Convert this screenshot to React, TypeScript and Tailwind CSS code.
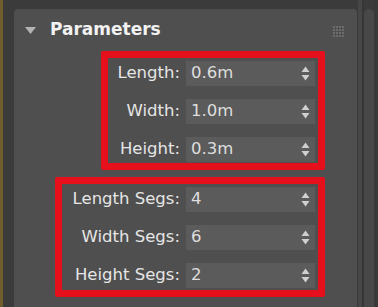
const group1 = [
  { label: "Length:", value: "0.6m" },
  { label: "Width:", value: "1.0m" },
  { label: "Height:", value: "0.3m" },
]

const group2 = [
  { label: "Length Segs:", value: "4" },
  { label: "Width Segs:", value: "6" },
  { label: "Height Segs:", value: "2" },
]

function Spinner() {
  return (
    <svg width="9" height="15" viewBox="0 0 9 15" className="shrink-0">
      <path d="M4.5 0.5 L8.5 6 L0.5 6 Z" fill="#cfcfcf" />
      <path d="M0.5 9 L8.5 9 L4.5 14.5 Z" fill="#cfcfcf" />
    </svg>
  )
}

function Row({ label, value }: { label: string; value: string }) {
  return (
    <div className="flex h-[25px] items-center justify-end gap-[6px]">
      <span className="whitespace-nowrap text-[16.5px] leading-none text-[#e6e6e6]">{label}</span>
      <div className="flex h-[25px] w-[129px] items-center justify-between bg-[#5b5b5b] pl-[5px] pr-[5px]">
        <span className="text-[16.5px] leading-none text-[#dedede]">{value}</span>
        <Spinner />
      </div>
    </div>
  )
}

function GridIcon() {
  return (
    <svg width="11" height="11" viewBox="0 0 11 11">
      {[0, 3, 6, 9].map((y) =>
        [0, 3, 6, 9].map((x) => (
          <rect key={`${x}-${y}`} x={x} y={y} width="2" height="2" fill="#6c6c6c" />
        ))
      )}
    </svg>
  )
}

export default function App() {
  return (
    <div
      className="flex h-[307px] w-[378px] overflow-hidden bg-[#3b3b3b]"
      style={{ fontFamily: '"DejaVu Sans", Verdana, sans-serif' }}
    >
      {/* gold edge */}
      <div className="w-[3px] shrink-0 bg-[#6f5d2b]" />

      {/* rollout panel */}
      <div className="ml-[11px] mt-[9px] flex h-[310px] w-[343px] shrink-0 flex-col items-end rounded-t-[4px] bg-[#4f4f4f] pr-[32px]">
        <div className="relative flex h-[42px] w-[343px] -mr-[32px] shrink-0 items-start pt-[12px]">
          <svg width="11" height="7" viewBox="0 0 11 7" className="ml-[11px] mt-[6px]">
            <path d="M0 0 L11 0 L5.5 7 Z" fill="#b3b3b3" />
          </svg>
          <span className="ml-[14px] text-[17px] font-bold leading-none text-[#f2f2f2]">Parameters</span>
          <div className="ml-auto mr-[13px] mt-[5px]">
            <GridIcon />
          </div>
        </div>

        <div className="flex w-[224px] flex-col gap-[13px] rounded-[2px] border-[7px] border-[#e5101c] pb-[1px] pr-[3px] pt-[3px]">
          {group1.map((r) => (
            <Row key={r.label} {...r} />
          ))}
        </div>

        <div className="mt-[7px] flex w-[270px] flex-col gap-[13px] rounded-[2px] border-[7px] border-[#e5101c] pb-[2px] pr-[3px] pt-[3px]">
          {group2.map((r) => (
            <Row key={r.label} {...r} />
          ))}
        </div>
      </div>

      {/* scrollbar */}
      <div className="ml-[1px] flex shrink-0">
        <div className="w-[4px] bg-[#474747]" />
        <div className="w-[2px] bg-[#373737]" />
        <div className="mt-[9px] w-[10px] rounded-t-[5px] bg-[#484848]" />
        <div className="w-[4px] bg-[#393939]" />
      </div>
    </div>
  )
}
